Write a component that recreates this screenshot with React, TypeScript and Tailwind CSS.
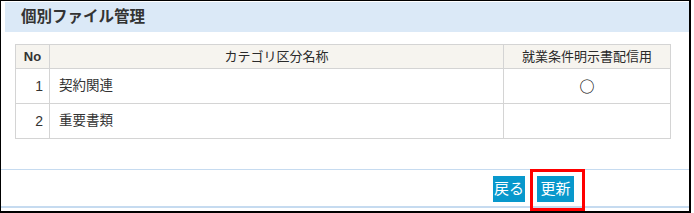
import React from "react";

const font = { fontFamily: '"Liberation Sans", "Noto Sans CJK JP", sans-serif' };

export default function App() {
  const rows = [
    { no: 1, name: "契約関連", flag: true },
    { no: 2, name: "重要書類", flag: false },
  ];
  return (
    <div style={font} className="relative w-[691px] h-[213px] bg-white border-black border-t border-l border-r-2 border-b-2 flex flex-col text-[#333]">
      <div className="mt-[1px] ml-[4px] h-[30px] bg-[#dbe9f7] flex items-center pl-[16px]">
        <span className="text-[15.5px] font-bold text-[#333]">個別ファイル管理</span>
      </div>
      <div className="mt-[12px] ml-[14px]">
        <table className="w-[656px] border-collapse table-fixed text-[13px]">
          <colgroup>
            <col className="w-[34px]" />
            <col className="w-[454px]" />
            <col />
          </colgroup>
          <thead>
            <tr className="h-[24px] bg-[#f6f4ef]">
              <th className="border border-[#d4d4d4] font-bold text-center text-[13px]">No</th>
              <th className="border border-[#d4d4d4] font-normal text-center text-[#2a2a2a]">カテゴリ区分名称</th>
              <th className="border border-[#d4d4d4] font-normal text-center text-[#2a2a2a]">就業条件明示書配信用</th>
            </tr>
          </thead>
          <tbody>
            {rows.map((r) => (
              <tr key={r.no} className="h-[35px]">
                <td className="border border-[#d4d4d4] text-right pr-[6px] text-[14px]">{r.no}</td>
                <td className="border border-[#d4d4d4] pl-[9px] text-[13.5px]">{r.name}</td>
                <td className="border border-[#d4d4d4] text-center text-[15px] font-['Noto_Sans_CJK_JP',sans-serif] font-medium text-black">{r.flag ? "○" : ""}</td>
              </tr>
            ))}
          </tbody>
        </table>
      </div>
      <div className="mt-[30px] h-px bg-[#c6dbf0]" />
      <div className="h-[36px] flex items-center justify-end pr-[115px] gap-[12px] pt-[1px]">
        <button className="h-[26px] w-[32px] bg-[#0898cc] text-white text-[15px] leading-none flex items-center justify-center">戻る</button>
        <button className="h-[26px] w-[37px] bg-[#0898cc] text-white text-[15px] leading-none flex items-center justify-center">更新</button>
      </div>
      <div className="h-[2px] bg-[#c6dbf0]" />
      <div className="absolute left-[529px] top-[168px] w-[55px] h-[42px] border-[3px] border-[#ff0000]" />
    </div>
  );
}
